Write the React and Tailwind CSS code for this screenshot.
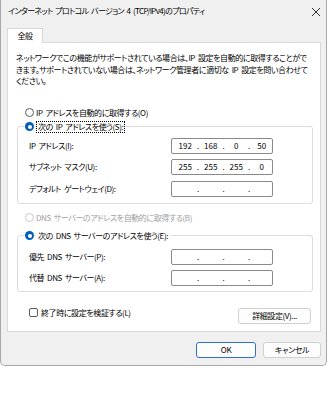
import React from "react";

const FONT =
  "font-['Noto_Sans_CJK_JP','Noto_Sans',sans-serif] [font-feature-settings:'palt'] [word-spacing:1.5px]";

// Windows 11 style radio button
const Radio = ({ checked, disabled }) => {
  if (checked) {
    return (
      <span className="w-[9px] h-[9px] rounded-full bg-[#005fb8] flex items-center justify-center shrink-0">
        <span className="w-[4px] h-[4px] rounded-full bg-white" />
      </span>
    );
  }
  return (
    <span
      className={
        disabled
          ? "w-[9px] h-[9px] rounded-full border border-[#c8c8c8] bg-white shrink-0"
          : "w-[9px] h-[9px] rounded-full border border-[#5c5c5c] bg-white shrink-0"
      }
    />
  );
};

// IP address control: four fields split by dots
const IpBox = ({ parts = ["", "", "", ""] }) => (
  <div className="w-[102px] h-[16px] border border-[#8a8a8a] rounded-[2px] bg-white flex items-center pl-[4px] text-[8px] tracking-normal leading-none text-black">
    <span className="w-[18.5px] text-center">{parts[0]}</span>
    <span className="w-[7px] text-center">.</span>
    <span className="w-[18.5px] text-center">{parts[1]}</span>
    <span className="w-[7px] text-center">.</span>
    <span className="w-[18.5px] text-center">{parts[2]}</span>
    <span className="w-[7px] text-center">.</span>
    <span className="w-[18.5px] text-center">{parts[3]}</span>
  </div>
);

const Row = ({ label, parts }) => (
  <div className="flex items-center h-[16px]">
    <span className="w-[153px] pl-[11px] whitespace-nowrap">{label}</span>
    <IpBox parts={parts} />
  </div>
);

const Button = ({ children, primary, className = "" }) => (
  <button
    className={
      (primary
        ? "border-[#2f6fc6] "
        : "border-[#d0d0d0] ") +
      "h-[16px] border rounded-[3px] bg-[#fdfdfd] text-[8px] leading-none text-black flex items-center justify-center " +
      className
    }
  >
    {children}
  </button>
);

export default function App() {
  return (
    <div className={"w-[329px] h-[416px] bg-white text-black text-[8px] tracking-[-0.4px] " + FONT}>
      <div className="w-[327px] h-[366px] bg-[#f0f0f0] border-l border-r border-b border-[#a8a8a8] rounded-b-[5px] flex flex-col">
        {/* Title bar */}
        <div className="h-[28px] flex items-start justify-between pl-[7px] pr-[4px] pt-[5px]">
          <span className="text-[8px] tracking-[-0.65px] leading-[12px] whitespace-nowrap">
            インターネット プロトコル バージョン 4 (TCP/IPv4)のプロパティ
          </span>
          <svg width="10" height="10" viewBox="0 0 10 10" className="mt-[2px] mr-[1px]">
            <path d="M1 1 L9 9 M9 1 L1 9" stroke="#1a1a1a" strokeWidth="0.9" />
          </svg>
        </div>

        <div className="pl-[6px]">
          {/* Tab */}
          <div className="w-[36px] h-[15px] bg-white border-t border-l border-r border-[#d9d9d9] flex items-center justify-center leading-none -mb-px relative">
            全般
          </div>

          {/* Panel */}
          <div className="w-[314px] h-[290px] bg-white border border-[#d9d9d9] flex flex-col">
            <p className="pt-[9px] pl-[8px] leading-[11.5px] whitespace-nowrap">
              ネットワークでこの機能がサポートされている場合は、IP 設定を自動的に取得することがで
              <br />
              きます。サポートされていない場合は、ネットワーク管理者に適切な IP 設定を問い合わせて
              <br />
              ください。
            </p>

            <label className="mt-[20px] pl-[17px] h-[12px] flex items-center gap-[2px] whitespace-nowrap">
              <Radio />
              <span>IP アドレスを自動的に取得する(O)</span>
            </label>

            <fieldset className="mt-[2px] ml-[9px] w-[296px] border border-[#dcdcdc] rounded-[3px] pb-[6px] flex flex-col gap-[5.5px]">
              <legend className="ml-[6px] px-[1px] h-[12px] flex items-center gap-[2px] whitespace-nowrap">
                <Radio checked />
                <span className="border border-dotted border-black leading-[10px] px-px">
                  次の IP アドレスを使う(S):
                </span>
              </legend>
              <div className="h-[5px] -mb-[5.5px]" />
              <Row label="IP アドレス(I):" parts={["192", "168", "0", "50"]} />
              <Row label="サブネット マスク(U):" parts={["255", "255", "255", "0"]} />
              <Row label="デフォルト ゲートウェイ(D):" />
            </fieldset>

            <label className="mt-[8px] pl-[17px] h-[12px] flex items-center gap-[2px] whitespace-nowrap text-[#a0a0a0]">
              <Radio disabled />
              <span>DNS サーバーのアドレスを自動的に取得する(B)</span>
            </label>

            <fieldset className="mt-[6px] ml-[9px] w-[296px] border border-[#dcdcdc] rounded-[3px] pb-[5px] flex flex-col gap-[5px]">
              <legend className="ml-[6px] px-[1px] h-[12px] flex items-center gap-[2px] whitespace-nowrap">
                <Radio checked />
                <span className="px-[2px]">次の DNS サーバーのアドレスを使う(E):</span>
              </legend>
              <div className="h-[7px] -mb-[5px]" />
              <Row label="優先 DNS サーバー(P):" />
              <Row label="代替 DNS サーバー(A):" />
            </fieldset>

            <div className="mt-[15px] pl-[21px] pr-[9px] flex items-start justify-between">
              <label className="h-[12px] flex items-center gap-[3px] whitespace-nowrap">
                <span className="w-[9px] h-[9px] rounded-[2px] border border-[#5c5c5c] bg-white" />
                <span>終了時に設定を検証する(L)</span>
              </label>
              <Button className="w-[73px] mt-[1px]">詳細設定(V)...</Button>
            </div>
          </div>
        </div>

        {/* Dialog buttons */}
        <div className="mt-[10px] pr-[5px] flex justify-end gap-[7px]">
          <Button primary className="w-[60px]">OK</Button>
          <Button className="w-[58px]">キャンセル</Button>
        </div>
      </div>
    </div>
  );
}
